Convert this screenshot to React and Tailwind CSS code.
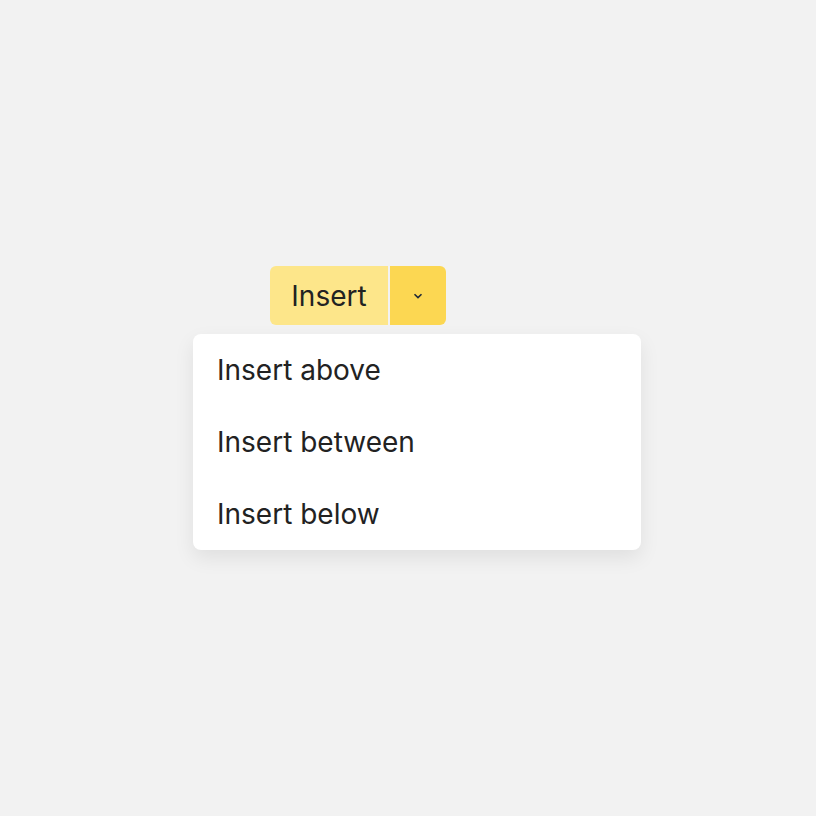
export default function App() {
  return (
    <div
      className="min-h-[816px] w-full bg-[#f2f2f2] pt-[266px] pl-[193px]"
      style={{ fontFamily: "Inter, 'Noto Sans', sans-serif" }}
    >
      <div className="flex flex-col items-start">
        <div className="ml-[77px] flex h-[59px] gap-[2px]">
          <button className="flex h-full w-[118px] items-center justify-center rounded-l-[6px] bg-[#fde68a] text-[28px] leading-none text-[#222222]">
            Insert
          </button>
          <button className="flex h-full w-[56px] items-center justify-center rounded-r-[6px] bg-[#fcd752] text-[#222222]">
            <svg width="10" height="6" viewBox="0 0 10 6" fill="none">
              <path d="M1.5 1.2L5 4.6L8.5 1.2" stroke="#1f2937" strokeWidth="1.6" />
            </svg>
          </button>
        </div>
        <div className="mt-[9px] flex w-[448px] flex-col rounded-[8px] bg-white shadow-[0_8px_20px_rgba(0,0,0,0.08)]">
          {["Insert above", "Insert between", "Insert below"].map((t) => (
            <div key={t} className="flex h-[72px] items-center px-[24px] text-[28px] leading-none text-[#222222]">
              {t}
            </div>
          ))}
        </div>
      </div>
    </div>
  );
}
